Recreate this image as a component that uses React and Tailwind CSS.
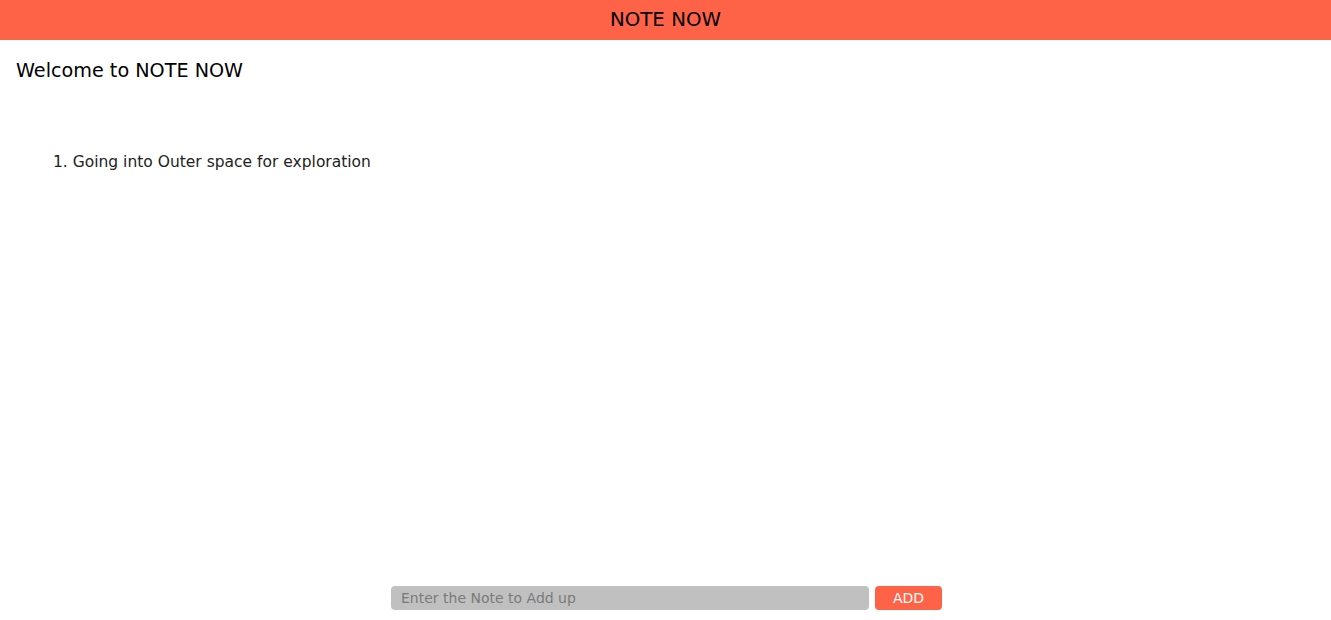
import React, { useState } from 'react';

const App = () => {
    const [notes, setNotes] = useState(['Going into Outer space for exploration']);
    const [text, setText] = useState('');

    const addNote = () => {
        if (!text.trim()) return;
        setNotes([...notes, text]);
        setText('');
    };

    return (
        <div className="min-h-screen flex flex-col bg-white text-black font-['DejaVu_Sans',sans-serif]">
            <header className="h-10 bg-[#ff6347] flex items-center justify-center">
                <h1 className="text-[19.8px] leading-none">NOTE NOW</h1>
            </header>
            <main className="flex-1 px-4">
                <h2 className="mt-[22px] text-[19.2px] leading-[18px]">Welcome to NOTE NOW</h2>
                <ol className="mt-[72px] pl-[37px] list-decimal list-inside text-[15.5px] leading-5 text-[#222]">
                    {notes.map((n, i) => (
                        <li key={i}>{n}</li>
                    ))}
                </ol>
            </main>
            <footer className="flex justify-center gap-[6px] pb-[10px] pl-[2px]">
                <input
                    value={text}
                    onChange={(e) => setText(e.target.value)}
                    placeholder="Enter the Note to Add up"
                    className="w-[478px] h-6 rounded bg-[#c0c0c0] px-[10px] text-[14px] placeholder:text-[#7a7a7a] outline-none"
                />
                <button onClick={addNote} className="w-[67px] h-6 rounded bg-[#ff6347] text-white text-[14px]">ADD</button>
            </footer>
        </div>
    );
};

export default App;
